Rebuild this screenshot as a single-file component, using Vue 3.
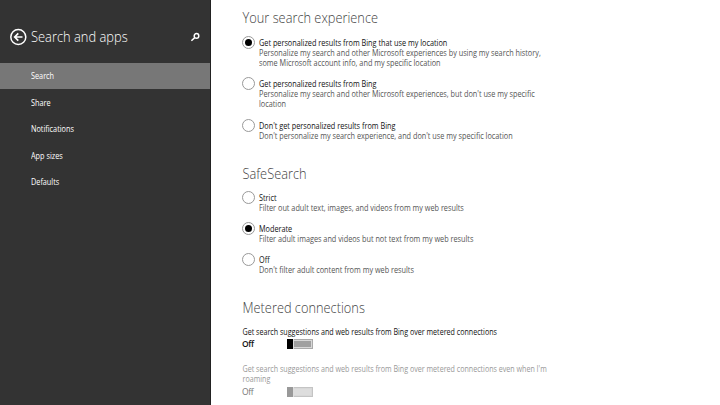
<script setup>
const nav = ['Search', 'Share', 'Notifications', 'App sizes', 'Defaults']

const groups = [
  {
    title: 'Your search experience',
    kind: 'experience',
    options: [
      {
        label: 'Get personalized results from Bing that use my location',
        lines: [
          'Personalize my search and other Microsoft experiences by using my search history,',
          'some Microsoft account info, and my specific location',
        ],
        on: true,
      },
      {
        label: 'Get personalized results from Bing',
        lines: ["Personalize my search and other Microsoft experiences, but don't use my specific", 'location'],
      },
      {
        label: "Don't get personalized results from Bing",
        lines: ["Don't personalize my search experience, and don't use my specific location"],
      },
    ],
  },
  {
    title: 'SafeSearch',
    kind: 'safe',
    options: [
      { label: 'Strict', lines: ['Filter out adult text, images, and videos from my web results'] },
      { label: 'Moderate', lines: ['Filter adult images and videos but not text from my web results'], on: true },
      { label: 'Off', lines: ["Don't filter adult content from my web results"] },
    ],
  },
]

const toggles = [
  { lines: ['Get search suggestions and web results from Bing over metered connections'] },
  {
    lines: ["Get search suggestions and web results from Bing over metered connections even when I'm", 'roaming'],
    disabled: true,
  },
]
</script>

<template>
  <div class="page">
    <aside class="side">
      <header class="head">
        <svg class="back" viewBox="0 0 18 18">
          <circle cx="9.3" cy="9" r="7.5" />
          <path d="M13.5 9H5.9M9.3 5.4L5.7 9l3.6 3.6" />
        </svg>
        <h1><span>Search and apps</span></h1>
        <svg class="find" viewBox="0 0 10 10">
          <circle cx="6.5" cy="3.9" r="2.3" />
          <path d="M4.8 5.6L1.4 8.8" />
        </svg>
      </header>
      <nav>
        <a v-for="(item, i) in nav" :key="item" :class="{ active: i === 0 }"><span>{{ item }}</span></a>
      </nav>
    </aside>
    <main class="main">
      <section v-for="g in groups" :key="g.title" :class="g.kind">
        <h2><span>{{ g.title }}</span></h2>
        <div class="options">
          <div v-for="o in g.options" :key="o.label" class="option">
            <i class="radio" :class="{ on: o.on }"></i>
            <div>
              <p class="label"><span>{{ o.label }}</span></p>
              <p v-for="l in o.lines" :key="l" class="desc"><span>{{ l }}</span></p>
            </div>
          </div>
        </div>
      </section>
      <section class="metered">
        <h2><span>Metered connections</span></h2>
        <div v-for="(t, i) in toggles" :key="i" class="setting" :class="{ disabled: t.disabled }">
          <p v-for="l in t.lines" :key="l"><span>{{ l }}</span></p>
          <div class="row">
            <b>Off</b>
            <i class="switch"></i>
          </div>
        </div>
      </section>
    </main>
  </div>
</template>

<style>
body {
  margin: 0;
  overflow: hidden;
}
</style>

<style scoped>
.page {
  display: flex;
  width: 720px;
  height: 405px;
  overflow: hidden;
  background: #fff;
  font-family: "Open Sans", "Noto Sans", sans-serif;
  font-size: 8.5px;
}
h1, h2, p {
  margin: 0;
  white-space: nowrap;
}
/* Condensed text setting */
h1 span, h2 span, p span, nav span {
  display: block;
  width: max-content;
  transform: scaleX(0.857);
  transform-origin: 0 50%;
}
.side {
  box-sizing: border-box;
  width: 211px;
  flex: none;
  background: #333;
  border-right: 1px solid #222;
  color: #fff;
}
.head {
  display: flex;
  align-items: center;
  box-sizing: border-box;
  height: 63px;
  padding: 11px 10px 0 9px;
}
.back {
  width: 18px;
  height: 18px;
  margin-right: 4px;
}
.back, .find {
  fill: none;
  stroke: #fff;
  stroke-width: 1.5;
}
.back path {
  stroke-width: 1.7;
}
.find {
  width: 10px;
  height: 10px;
  margin-left: auto;
}
h1 {
  width: 100px;
  font-size: 14.5px;
  font-weight: 300;
  line-height: 20px;
  color: #fff;
}
h1 span {
  transform: scaleX(0.889);
}
nav a {
  display: flex;
  align-items: center;
  box-sizing: border-box;
  height: 26.4px;
  padding: 0 0 0.6px 31px;
}
nav a.active {
  background: #777;
}
.main {
  padding: 8px 0 0 31px;
}
h2 {
  height: 20px;
  line-height: 20px;
  font-size: 14.5px;
  font-weight: 300;
  color: #444;
}
h2 span {
  transform: translateX(0.5px) scaleX(0.883);
}
.options {
  display: flex;
  flex-direction: column;
  gap: 10.5px;
  padding-top: 8.5px;
}
.safe {
  padding-top: 23px;
}
.safe .options {
  gap: 10.2px;
  padding-top: 8px;
}
.option {
  display: flex;
  gap: 4px;
}
.radio {
  display: flex;
  align-items: center;
  justify-content: center;
  box-sizing: border-box;
  width: 13px;
  height: 13px;
  margin-top: -1px;
  border: 1px solid #999;
  border-radius: 50%;
}
.radio.on::after {
  content: "";
  width: 7px;
  height: 7px;
  border-radius: 50%;
  background: #000;
}
.label {
  height: 11px;
  line-height: 10px;
  color: #111;
}
.label span {
  transform: translateY(0.5px) scaleX(0.857);
}
.desc {
  line-height: 10px;
  color: #555;
}
.metered {
  padding-top: 23.5px;
}
.setting {
  padding-top: 8px;
  color: #111;
}
.setting p {
  line-height: 10.2px;
}
.setting p span {
  transform: translate(0.5px, 0.5px) scaleX(0.837);
}
.setting.disabled {
  padding-top: 14px;
  color: #999;
}
.setting.disabled p span {
  transform: translateX(0.5px) scaleX(0.837);
}
.row {
  display: flex;
  align-items: center;
  height: 11px;
  padding-top: 2px;
}
.row b {
  width: 45px;
  font-size: 8.5px;
  line-height: 10px;
  font-weight: 600;
  letter-spacing: -0.4px;
}
.disabled b {
  font-weight: 400;
  color: #777;
}
.switch {
  position: relative;
  box-sizing: border-box;
  width: 26px;
  height: 10px;
  border: 1px solid #aaa;
  background: #a0a0a0;
  box-shadow: inset 0 0 0 1px #d8d8d8;
}
.switch::before {
  content: "";
  position: absolute;
  top: -1px;
  left: -1px;
  width: 6px;
  height: 10px;
  background: #000;
  border-right: 1px solid #ddd;
}
.disabled .row {
  padding-top: 2.6px;
}
.disabled .switch {
  border-color: #c4c4c4;
  background: #ddd;
}
.disabled .switch::before {
  background: #999;
}
</style>
